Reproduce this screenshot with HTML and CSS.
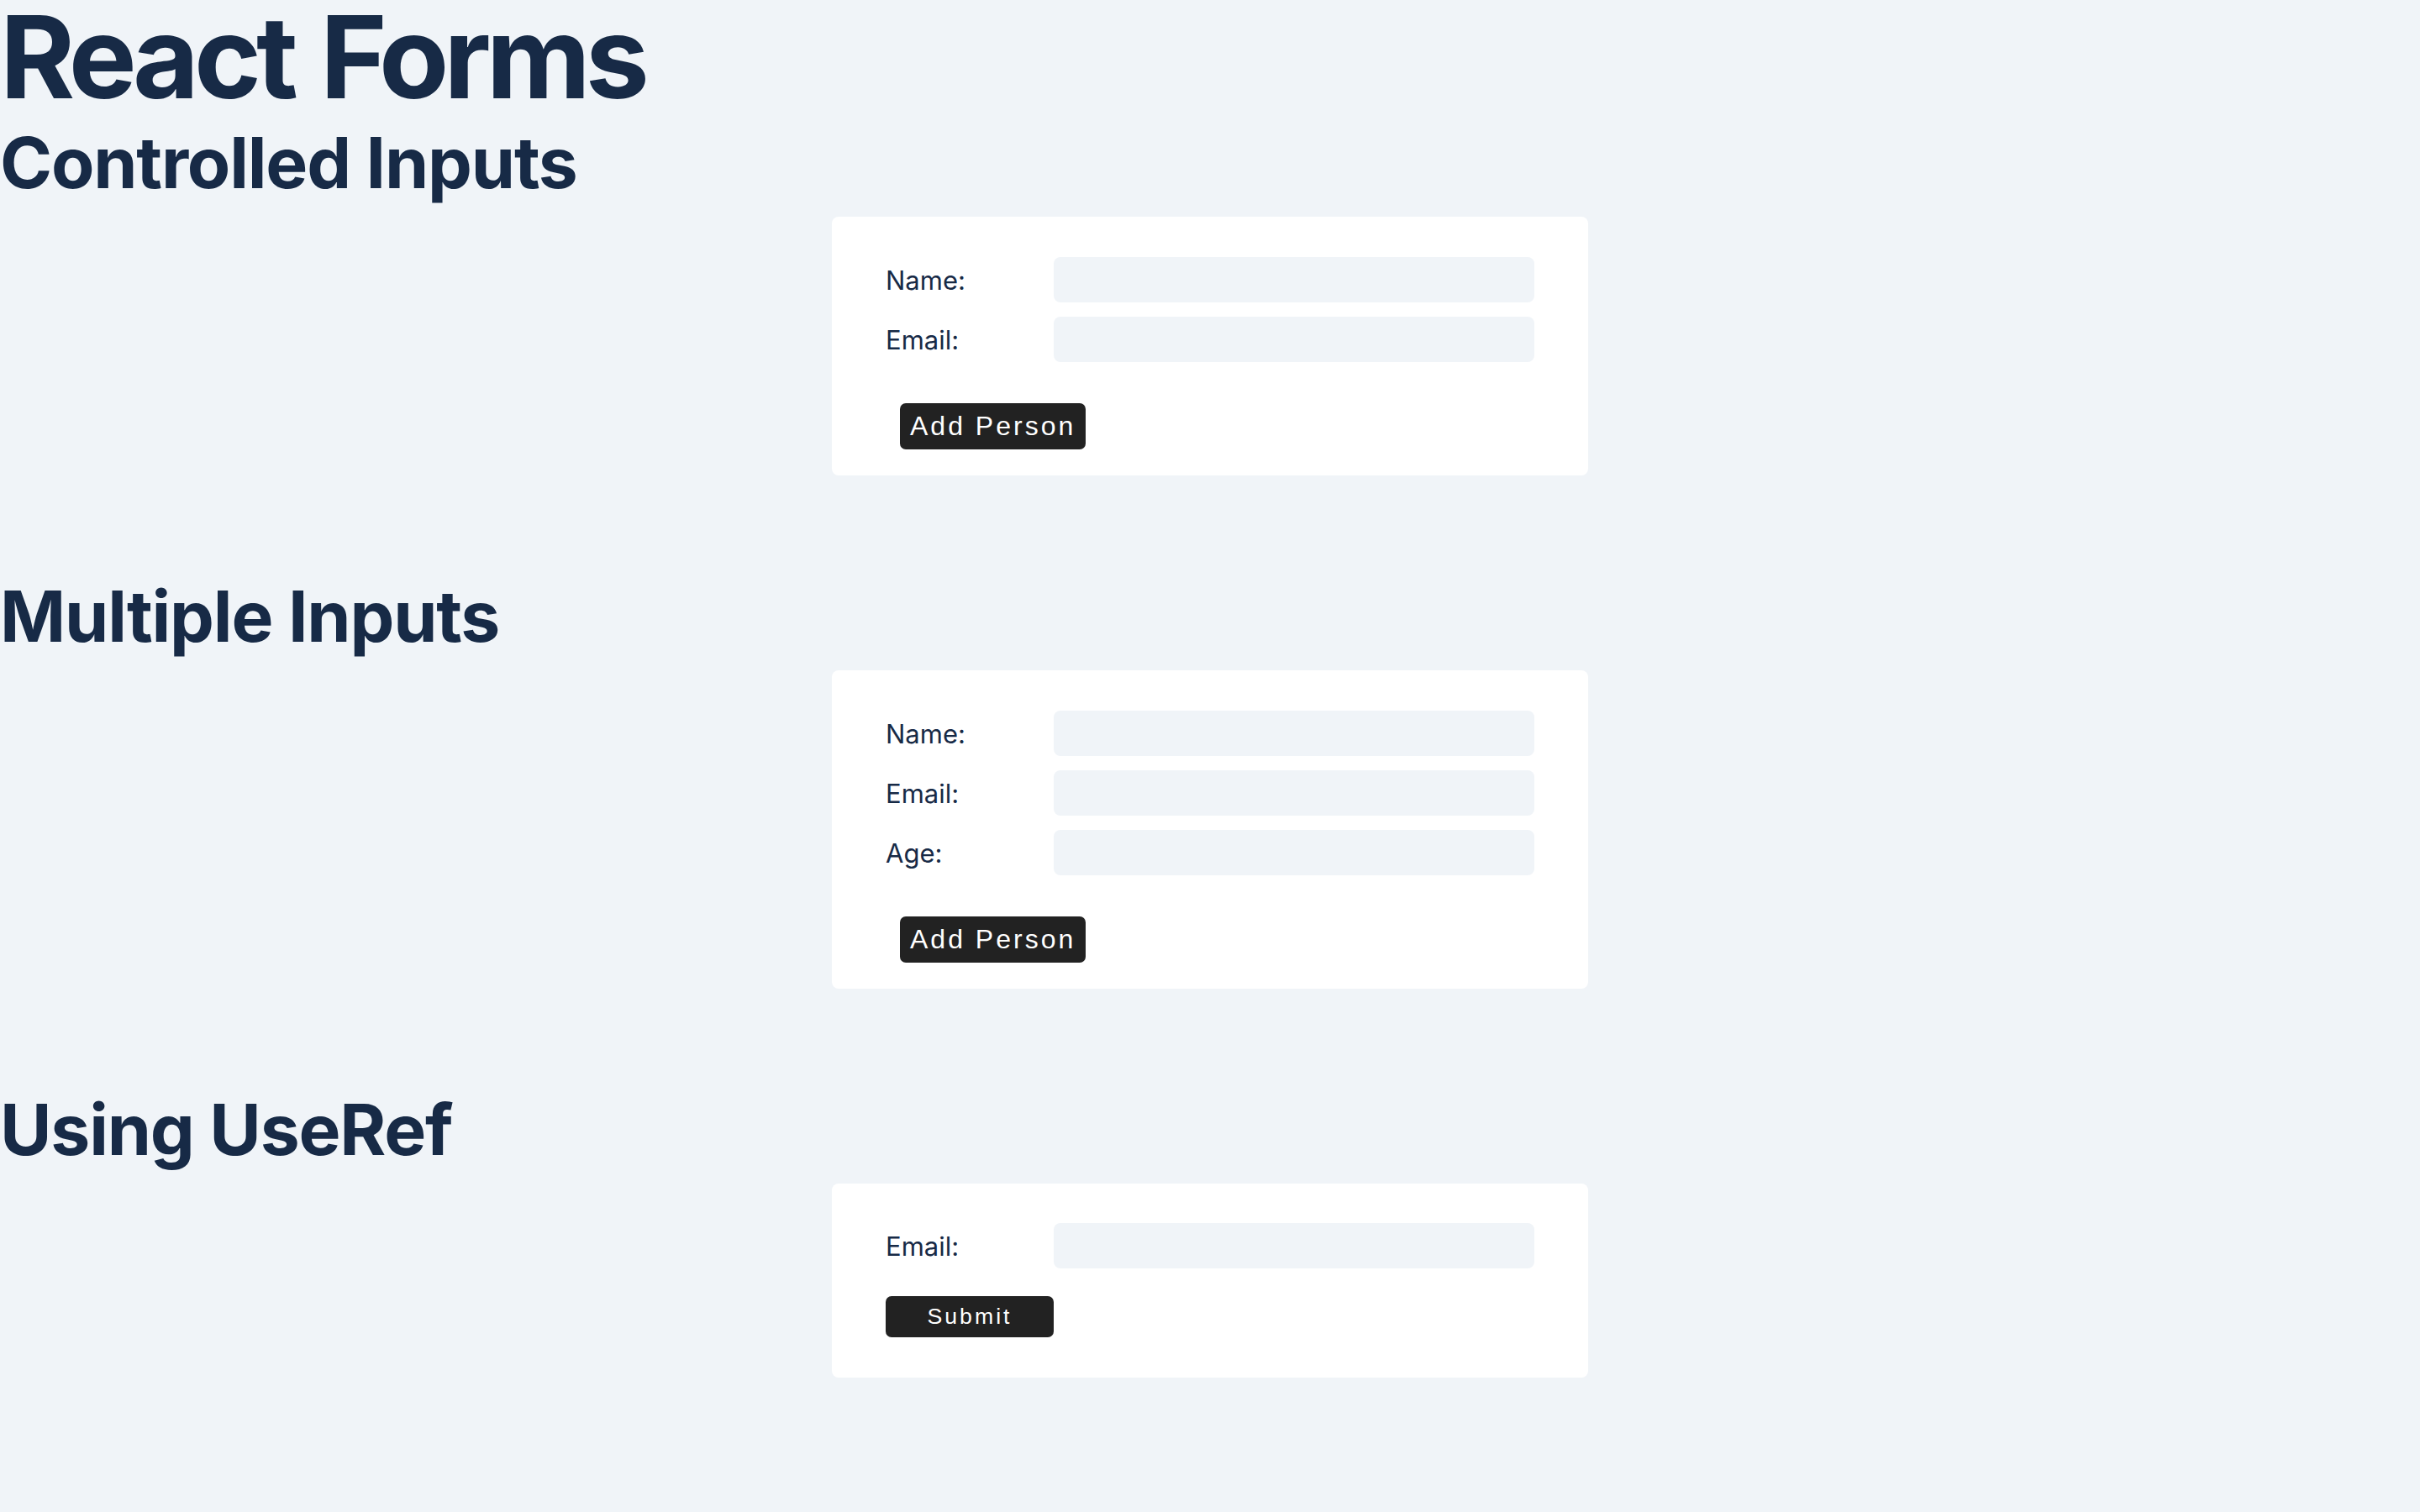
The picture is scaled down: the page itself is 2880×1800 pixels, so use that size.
FILE: index.html
```html
<!DOCTYPE html>
<html lang="en">
<head>
<meta charset="utf-8">
<title>React Forms</title>
<link rel="stylesheet" href="styles.css">
</head>
<body>
<main class="page">
  <h1 class="title">React Forms</h1>

  <section class="section section-first">
    <h2 class="section-title">Controlled Inputs</h2>
    <form class="card">
      <div class="fields">
        <label class="label" for="c-name">Name:</label>
        <input class="input" id="c-name" type="text">
        <label class="label" for="c-email">Email:</label>
        <input class="input" id="c-email" type="email">
      </div>
      <button class="btn btn-add" type="button">Add Person</button>
    </form>
  </section>

  <section class="section">
    <h2 class="section-title">Multiple Inputs</h2>
    <form class="card">
      <div class="fields">
        <label class="label" for="m-name">Name:</label>
        <input class="input" id="m-name" type="text">
        <label class="label" for="m-email">Email:</label>
        <input class="input" id="m-email" type="email">
        <label class="label" for="m-age">Age:</label>
        <input class="input" id="m-age" type="text">
      </div>
      <button class="btn btn-add" type="button">Add Person</button>
    </form>
  </section>

  <section class="section">
    <h2 class="section-title">Using UseRef</h2>
    <form class="card card-ref">
      <div class="fields">
        <label class="label" for="r-email">Email:</label>
        <input class="input" id="r-email" type="email">
      </div>
      <button class="btn btn-submit" type="button">Submit</button>
    </form>
  </section>
</main>
</body>
</html>
```

FILE: styles.css
```css
html, body {
  margin: 0;
  padding: 0;
}

body {
  background: #f0f4f8;
  color: #172a46;
  font-family: Inter, "Noto Sans", sans-serif;
}

.page {
  display: flex;
  flex-direction: column;
  padding-bottom: 160px;
}

.title {
  margin: 0;
  font-size: 136px;
  line-height: 136px;
  font-weight: 700;
  letter-spacing: -6px;
  word-spacing: 6px;
}

.section {
  display: flex;
  flex-direction: column;
  margin-top: 126px;
}

.section-first {
  margin-top: 16px;
}

.section-title {
  margin: 0 0 22px;
  font-size: 84px;
  line-height: 1;
  font-weight: 700;
  letter-spacing: -1.2px;
}

.card {
  box-sizing: border-box;
  width: 900px;
  align-self: center;
  background: #ffffff;
  border-radius: 8px;
  padding: 48px 64px 31px;
  display: flex;
  flex-direction: column;
  align-items: flex-start;
}

.card-ref {
  padding-top: 47px;
  padding-bottom: 48px;
}

.fields {
  width: 100%;
  display: grid;
  grid-template-columns: 200px 1fr;
  row-gap: 17px;
  align-items: center;
}

.label {
  font-size: 31px;
  color: #172a46;
}

.input {
  box-sizing: border-box;
  height: 54px;
  width: 100%;
  border: none;
  border-radius: 8px;
  background: #f0f4f8;
  margin: 0;
  padding: 0 12px;
}

.btn {
  font-family: "Liberation Sans", Arial, sans-serif;
  background: #222222;
  color: #ffffff;
  border: none;
  border-radius: 7px;
  margin: 0;
}

.btn-add {
  margin-top: 49px;
  margin-left: 17px;
  font-size: 32px;
  letter-spacing: 3px;
  padding: 9px 12px;
  line-height: 37px;
}

.btn-submit {
  margin-top: 33px;
  width: 200px;
  font-size: 26.67px;
  letter-spacing: 3px;
  line-height: 31px;
  padding: 9px 0;
  text-align: center;
}
```
